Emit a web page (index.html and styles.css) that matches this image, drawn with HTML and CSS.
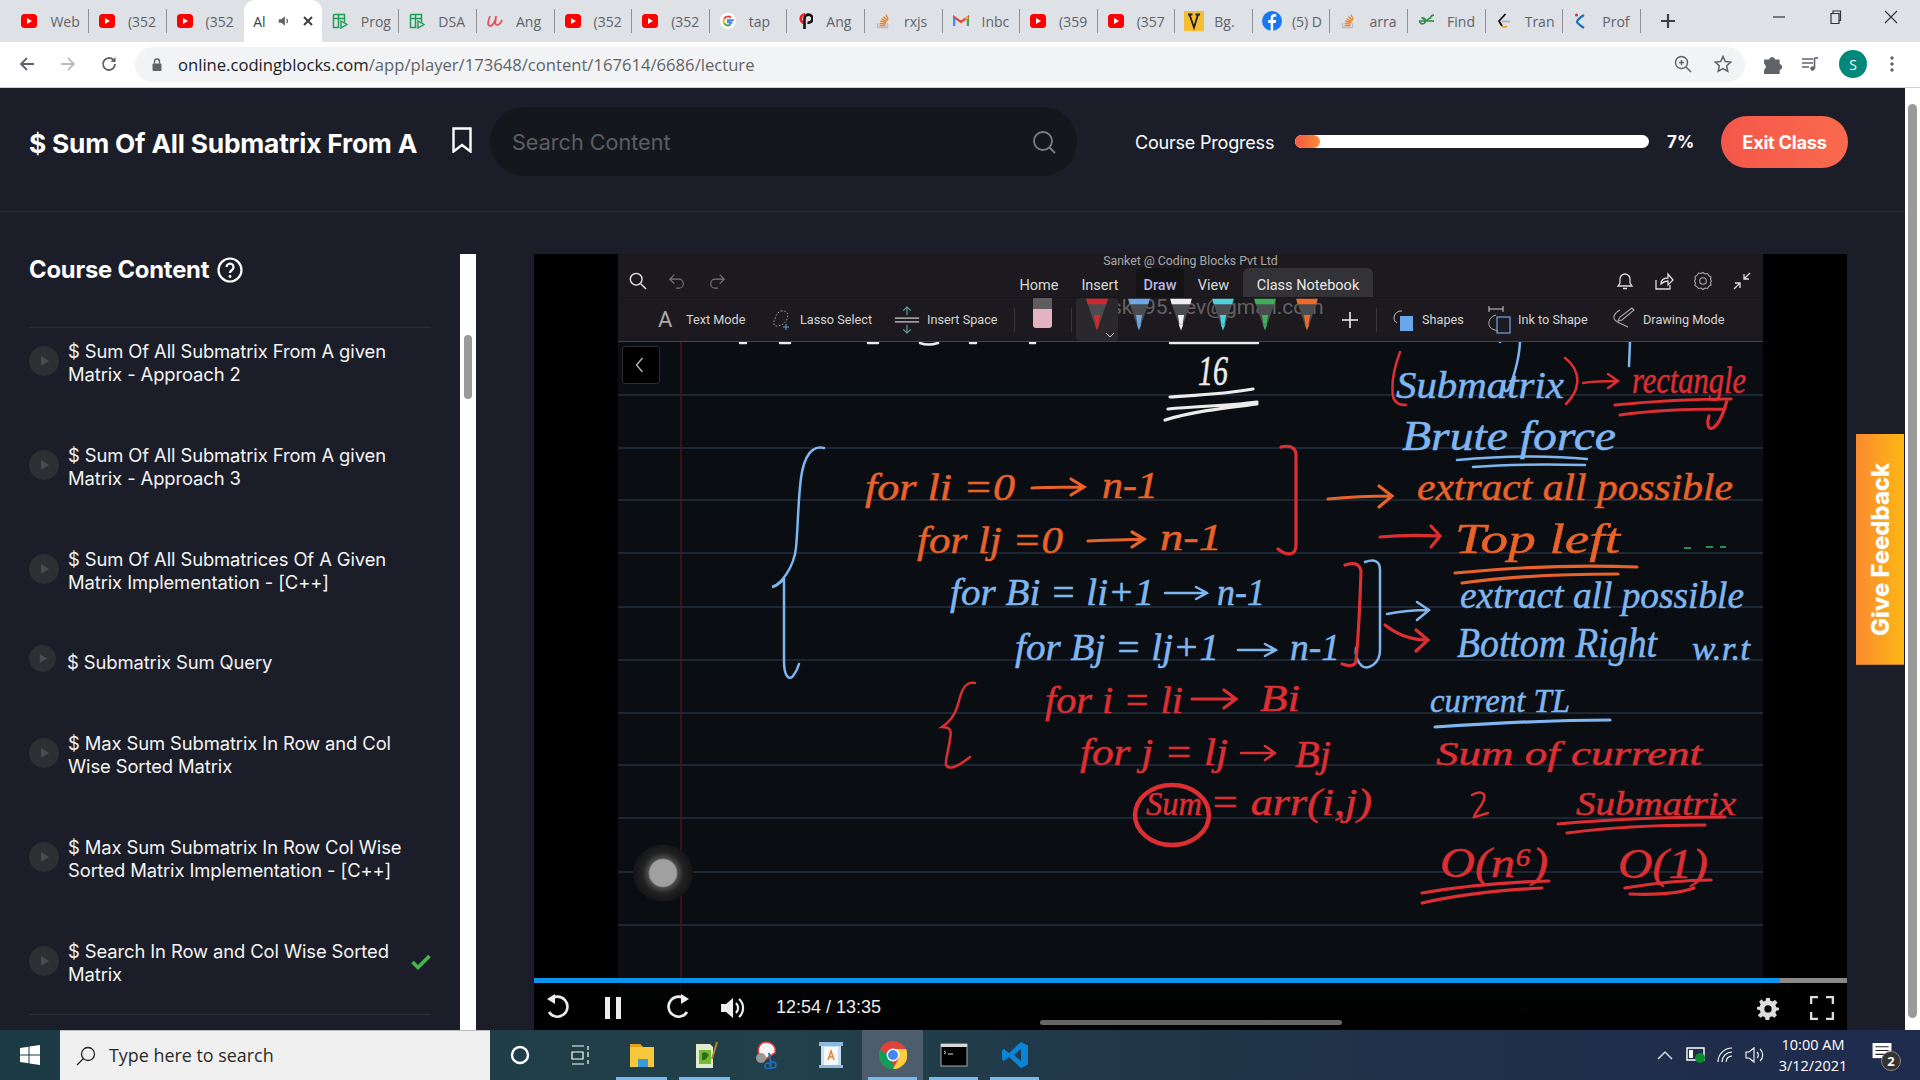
FILE: index.html
```html
<!DOCTYPE html>
<html lang="en">
<head>
<meta charset="utf-8">
<title>Coding Blocks player</title>
<link rel="stylesheet" href="styles.css">
</head>
<body>
<svg class="defs" aria-hidden="true">
  <symbol id="yt" viewBox="0 0 16 16"><rect x="0" y="1" width="16" height="14" rx="3.5" fill="#f00"/><path d="M6 5l5 3-5 3z" fill="#fff"/></symbol>
  <symbol id="sheet" viewBox="0 0 16 16"><path d="M1.5 1.5h11v8M1.5 1.5v13h6M1.5 5.5h11M6.5 1.5v13" fill="none" stroke="#1e9e55" stroke-width="1.5"/><path d="M9 8l6 3.5-6 3.5z" fill="none" stroke="#1e9e55" stroke-width="1.4"/></symbol>
  <symbol id="ang" viewBox="0 0 16 16"><path d="M3 3c-2 5-3 10 0 10s6-6 6-10c0 4-2 9 1 9s4-3 5-5" fill="none" stroke="#e2505a" stroke-width="1.7"/></symbol>
  <symbol id="goog" viewBox="0 0 18 18"><circle cx="9" cy="9" r="9" fill="#fff"/><path d="M15.500 8H9v2.400h3.800A4.300 4.300 0 0 1 10.500 13" fill="none" stroke="#4285f4" stroke-width="2.200"/><path d="M4.700 11.500a5 5 0 0 1 0-5" fill="none" stroke="#fbbc05" stroke-width="2.200"/><path d="M4.700 6.500A5 5 0 0 1 12.300 5.300" fill="none" stroke="#ea4335" stroke-width="2.200"/><path d="M4.700 11.500A5 5 0 0 0 11.500 13.300" fill="none" stroke="#34a853" stroke-width="2.200"/></symbol>
  <symbol id="cp" viewBox="0 0 16 16"><path d="M8 1.500a4.200 4.200 0 1 0 0 8.400" fill="none" stroke="#e22" stroke-width="2.800"/><path d="M7.500 16V5.500a4 4 0 1 1 3 4" fill="none" stroke="#111" stroke-width="2.600"/></symbol>
  <symbol id="so" viewBox="0 0 16 16"><path d="M2.500 10v4.500h10V10" fill="none" stroke="#bcbbbb" stroke-width="1.300"/><path d="M4.500 12.500h6M4.700 10.300l6 .5M5.300 8l5.800 1.500M6.500 5.700l5.200 3M8.500 3.500l4 4.200M11 1.500l2.200 5.300" stroke="#f48024" stroke-width="1.300" fill="none"/></symbol>
  <symbol id="gm" viewBox="0 0 16 16"><path d="M1 13V4l7 5 7-5v9" fill="none" stroke="#ea4335" stroke-width="2.200"/><path d="M1 13V5" stroke="#4285f4" stroke-width="2.200"/><path d="M15 13V5" stroke="#34a853" stroke-width="2.200"/><path d="M12.500 5.800L15 4" stroke="#fbbc05" stroke-width="2.200"/></symbol>
  <symbol id="vv" viewBox="0 0 20 20"><rect width="20" height="20" fill="#f5bd33"/><path d="M4 3.500h4.500M11.500 3.500H16M5.500 3.500l4.500 13 4-13" fill="none" stroke="#222" stroke-width="1.800"/></symbol>
  <symbol id="fb" viewBox="0 0 20 20"><circle cx="10" cy="10" r="10" fill="#1877f2"/><path d="M11.200 20v-8h2.500l.5-3h-3V7.200c0-1 .4-1.500 1.500-1.500h1.600V3.200c-3.400-.6-5.600.4-5.600 3.500V9H6.200v3h2.500v8z" fill="#fff"/></symbol>
  <symbol id="gfg" viewBox="0 0 16 16"><path d="M8 8H1.500a3 3 0 1 0 2-3c2 0 3 2 4.500 3 1.500-1 2.500-3 4.500-3a3 3 0 1 1 2 3z" fill="none" stroke="#2f8d46" stroke-width="1.600"/></symbol>
  <symbol id="lc" viewBox="0 0 16 16"><path d="M9.500 1L3 8l3 5" fill="none" stroke="#111" stroke-width="1.800"/><path d="M6 13c1 1.500 3 1.500 5 0" fill="none" stroke="#f89f1b" stroke-width="1.800"/><path d="M6 8.500h8" stroke="#b3b3b3" stroke-width="1.800"/></symbol>
  <symbol id="kn" viewBox="0 0 16 16"><path d="M11 2C6 5 4 8 4 9c1 2 4 4 7 6" fill="none" stroke="#1d71b8" stroke-width="2.200"/><circle cx="3.500" cy="2" r="1.500" fill="#e22"/></symbol>
  <symbol id="spk" viewBox="0 0 16 16"><path d="M2 6h3l4-3.500v11L5 10H2z" fill="#5f6368"/><path d="M11 5.500a4 4 0 0 1 0 5" fill="none" stroke="#5f6368" stroke-width="1.300"/></symbol>
  <symbol id="pen" viewBox="0 0 34 44"><path d="M3 2h28L20 34h-6z" fill="#4a4c50"/><path d="M14 34h6l-3 8z" fill="currentColor"/><path d="M3 1h28l-2 7H5z" fill="currentColor"/><path d="M13 22h8l-2 12h-4z" fill="currentColor"/></symbol>
  <symbol id="play" viewBox="0 0 30 30"><circle cx="15" cy="15" r="15" fill="#2e2f33"/><path d="M12 10l8 5-8 5z" fill="#4b4c50"/></symbol>
</svg>

<div class="tabstrip">
  <div class="tab"><svg class="fav"><use href="#yt"/></svg><span class="tt">Web</span></div>
  <div class="tab"><svg class="fav"><use href="#yt"/></svg><span class="tt">(352</span></div>
  <div class="tab nosep"><svg class="fav"><use href="#yt"/></svg><span class="tt">(352</span></div>
  <div class="tab active"><span class="tt tt-short">Al</span><svg class="spk"><use href="#spk"/></svg><svg class="tabx" viewBox="0 0 12 12"><path d="M2 2l8 8M10 2l-8 8" stroke="#3c4043" stroke-width="2"/></svg></div>
  <div class="tab"><svg class="fav"><use href="#sheet"/></svg><span class="tt">Prog</span></div>
  <div class="tab"><svg class="fav"><use href="#sheet"/></svg><span class="tt">DSA</span></div>
  <div class="tab"><svg class="fav"><use href="#ang"/></svg><span class="tt">Ang</span></div>
  <div class="tab"><svg class="fav"><use href="#yt"/></svg><span class="tt">(352</span></div>
  <div class="tab"><svg class="fav"><use href="#yt"/></svg><span class="tt">(352</span></div>
  <div class="tab"><svg class="fav"><use href="#goog"/></svg><span class="tt">tap</span></div>
  <div class="tab"><svg class="fav"><use href="#cp"/></svg><span class="tt">Ang</span></div>
  <div class="tab"><svg class="fav"><use href="#so"/></svg><span class="tt">rxjs</span></div>
  <div class="tab"><svg class="fav"><use href="#gm"/></svg><span class="tt">Inbc</span></div>
  <div class="tab"><svg class="fav"><use href="#yt"/></svg><span class="tt">(359</span></div>
  <div class="tab"><svg class="fav"><use href="#yt"/></svg><span class="tt">(357</span></div>
  <div class="tab"><svg class="fav fav-lg"><use href="#vv"/></svg><span class="tt">Bg.</span></div>
  <div class="tab"><svg class="fav fav-lg"><use href="#fb"/></svg><span class="tt">(5) D</span></div>
  <div class="tab"><svg class="fav"><use href="#so"/></svg><span class="tt">arra</span></div>
  <div class="tab"><svg class="fav"><use href="#gfg"/></svg><span class="tt">Find</span></div>
  <div class="tab"><svg class="fav"><use href="#lc"/></svg><span class="tt">Tran</span></div>
  <div class="tab"><svg class="fav"><use href="#kn"/></svg><span class="tt">Prof</span></div>
  <svg class="newtab" viewBox="0 0 16 16"><path d="M8 1v14M1 8h14" stroke="#3c4043" stroke-width="2.200"/></svg>
  <div class="winctl">
    <svg class="wc" viewBox="0 0 14 14"><path d="M1 7h12" stroke="#333" stroke-width="1.200"/></svg>
    <svg class="wc" viewBox="0 0 14 14"><path d="M3 3.500h8v10H3zM5 3.500V1h7.500v9.500H11" fill="none" stroke="#333" stroke-width="1.200"/></svg>
    <svg class="wc" viewBox="0 0 14 14"><path d="M1 1l12 12M13 1L1 13" stroke="#333" stroke-width="1.100"/></svg>
  </div>
</div>

<div class="toolbar">
  <svg class="navb" viewBox="0 0 18 18"><path d="M16 9H3M9 3L3 9l6 6" fill="none" stroke="#5f6368" stroke-width="1.800"/></svg>
  <svg class="navb" viewBox="0 0 18 18"><path d="M2 9h13M9 3l6 6-6 6" fill="none" stroke="#bbbdc0" stroke-width="1.800"/></svg>
  <svg class="navb" viewBox="0 0 18 18"><path d="M15 9a6 6 0 1 1-1.800-4.300L15 6.500" fill="none" stroke="#5f6368" stroke-width="1.800"/><path d="M15.500 2v5h-5z" fill="#5f6368"/></svg>
  <div class="omni">
    <svg class="lock" viewBox="0 0 12 14"><path d="M3.500 6V4a2.500 2.500 0 0 1 5 0v2" fill="none" stroke="#5f6368" stroke-width="1.400"/><rect x="1.500" y="6" width="9" height="7.500" rx="1" fill="#5f6368"/></svg>
    <span class="url"><span class="url-d">online.codingblocks.com</span>/app/player/173648/content/167614/6686/lecture</span>
    <svg class="omni-i zoomi" viewBox="0 0 18 18"><circle cx="7.500" cy="7.500" r="6" fill="none" stroke="#5f6368" stroke-width="1.500"/><path d="M12 12l5 5M7.500 5v5M5 7.500h5" stroke="#5f6368" stroke-width="1.500"/></svg>
    <svg class="omni-i stari" viewBox="0 0 18 18"><path d="M9 1.500l2.300 5 5.400.6-4 3.700 1.100 5.400L9 13.500l-4.800 2.700 1.100-5.400-4-3.700 5.400-.6z" fill="none" stroke="#5f6368" stroke-width="1.500"/></svg>
  </div>
  <svg class="tb-i ext" viewBox="0 0 18 18"><path d="M1 5h4.500a2.800 2.800 0 0 1 5.500 0H15v4a2.800 2.800 0 0 1 0 5.500V18H1v-4a2.800 2.800 0 0 0 0-5z" fill="#5f6368"/></svg>
  <svg class="tb-i med" viewBox="0 0 18 18"><path d="M1 4h11M1 8h11M1 12h7" stroke="#5f6368" stroke-width="1.600"/><path d="M13.500 3v10.500" stroke="#5f6368" stroke-width="1.600"/><circle cx="11.500" cy="13.500" r="2.200" fill="#5f6368"/><path d="M13.500 3H17" stroke="#5f6368" stroke-width="1.600"/></svg>
  <span class="avatar">S</span>
  <svg class="tb-i dots" viewBox="0 0 6 18"><circle cx="3" cy="3" r="1.700" fill="#5f6368"/><circle cx="3" cy="9" r="1.700" fill="#5f6368"/><circle cx="3" cy="15" r="1.700" fill="#5f6368"/></svg>
</div>

<div class="page">
  <div class="app">
    <header class="hdr">
      <h1 class="title">$ Sum Of All Submatrix From A</h1>
      <svg class="bm" viewBox="0 0 20 26"><path d="M1.500 1.500h17v23L10 18l-8.500 6.500z" fill="none" stroke="#fff" stroke-width="2.400"/></svg>
      <div class="search"><span class="search-t">Search Content</span>
        <svg class="search-i" viewBox="0 0 24 24"><circle cx="11" cy="11" r="9" fill="none" stroke="#7c7e83" stroke-width="1.800"/><path d="M17.500 17.500L23 23" stroke="#7c7e83" stroke-width="1.800"/></svg>
      </div>
      <span class="cp-label">Course Progress</span>
      <div class="cp-bar"><div class="cp-fill" style="width:7%"></div></div>
      <span class="cp-pct">7%</span>
      <button class="exit">Exit Class</button>
    </header>

    <div class="body">
      <aside class="side">
        <div class="course">
          <h2 class="cc-h">Course Content <svg class="help" viewBox="0 0 26 26"><circle cx="13" cy="13" r="11.500" fill="none" stroke="#fff" stroke-width="2.200"/><path d="M9.500 10a3.500 3.500 0 1 1 5.500 3c-1.500 1-2 1.500-2 3" fill="none" stroke="#fff" stroke-width="2.200"/><circle cx="13" cy="19.500" r="1.400" fill="#fff"/></svg></h2>
          <ul class="list">
            <li class="item"><svg class="pl"><use href="#play"/></svg><span class="it">$ Sum Of All Submatrix From A given<br>Matrix - Approach 2</span></li>
            <li class="item"><svg class="pl"><use href="#play"/></svg><span class="it">$ Sum Of All Submatrix From A given<br>Matrix - Approach 3</span></li>
            <li class="item"><svg class="pl"><use href="#play"/></svg><span class="it">$ Sum Of All Submatrices Of A Given<br>Matrix Implementation - [C++]</span></li>
            <li class="item item-one"><svg class="pl pl-sm"><use href="#play"/></svg><span class="it it-one">$ Submatrix Sum Query</span></li>
            <li class="item"><svg class="pl"><use href="#play"/></svg><span class="it">$ Max Sum Submatrix In Row and Col<br>Wise Sorted Matrix</span></li>
            <li class="item"><svg class="pl"><use href="#play"/></svg><span class="it">$ Max Sum Submatrix In Row Col Wise<br>Sorted Matrix Implementation - [C++]</span></li>
            <li class="item"><svg class="pl"><use href="#play"/></svg><span class="it">$ Search In Row and Col Wise Sorted<br>Matrix</span><svg class="chk" viewBox="0 0 20 16"><path d="M1.500 8l5.500 5.500L18.500 2" fill="none" stroke="#46b450" stroke-width="3.600"/></svg></li>
          </ul>
        </div>
        <div class="rail"><div class="rail-th"></div></div>
      </aside>

      <section class="video">
        <div class="frame">
          <div class="v-top">
            <span class="v-owner">Sanket @ Coding Blocks Pvt Ltd</span>
            <svg class="vt-i" viewBox="0 0 20 20"><circle cx="8" cy="8" r="6.500" fill="none" stroke="#e8e8e8" stroke-width="1.500"/><path d="M13 13l6 6" stroke="#e8e8e8" stroke-width="1.500"/></svg>
            <svg class="vt-i vt-undo" viewBox="0 0 20 20"><path d="M7 3L2 8l5 5M2 8h10a5 5 0 0 1 0 10H9" fill="none" stroke="#77797c" stroke-width="1.300"/></svg>
            <svg class="vt-i vt-redo" viewBox="0 0 20 20"><path d="M13 3l5 5-5 5M18 8H8a5 5 0 0 0 0 10h3" fill="none" stroke="#77797c" stroke-width="1.300"/></svg>
            <nav class="v-tabs">
              <span class="vtab vt-home">Home</span><span class="vtab vt-ins">Insert</span><span class="vtab vt-draw">Draw</span><span class="vtab vt-view">View</span><span class="vtab vt-cn">Class Notebook</span>
            </nav>
            <svg class="vr-i vr-first" viewBox="0 0 20 20"><path d="M3 15h14l-2-3V8a5 5 0 0 0-10 0v4zM8 17.500h4" fill="none" stroke="#ddd" stroke-width="1.300"/></svg>
            <svg class="vr-i" viewBox="0 0 20 20"><path d="M2 9v9h14v-4M7 13c0-4 3-6 7-6V3l5 6-5 5v-4c-3 0-5 1-7 3z" fill="none" stroke="#ddd" stroke-width="1.300"/></svg>
            <svg class="vr-i" viewBox="0 0 20 20"><path d="M10 1.500l2 1.500 2.500-.5 1.300 2.200 2.200 1.300-.5 2.500 1 1.500-1 1.500.5 2.500-2.200 1.300-1.300 2.200-2.500-.5-2 1.500-2-1.500-2.500.5L4.200 15.800 2 14.500l.5-2.500-1-2 1-2L2 5.500l2.200-1.300L5.500 2l2.500.5z" fill="none" stroke="#aaa" stroke-width="1.100"/><circle cx="10" cy="10" r="3.300" fill="none" stroke="#aaa" stroke-width="1.100"/></svg>
            <svg class="vr-i" viewBox="0 0 20 20"><path d="M18 2l-6 6M12 3v5h5M2 18l6-6M8 17v-5H3" fill="none" stroke="#ddd" stroke-width="1.300"/></svg>
          </div>
          <div class="ribbon">
            <span class="wm">ska95.dev@gmail.com</span>
            <span class="r-a">A</span><span class="rt rt-1">Text Mode</span>
            <svg class="ri ri-lasso" viewBox="0 0 18 22"><path d="M9 2c6-1 8 3 6 8-1 4-5 6-9 7-5 1-5-4-3-7 1-4 3-7 6-8z" fill="none" stroke="#999" stroke-width="1" stroke-dasharray="1.600 1.600"/><path d="M14 15v6M11 18h6" stroke="#5ea7e0" stroke-width="1"/></svg><span class="rt rt-2">Lasso Select</span>
            <svg class="ri ri-ins" viewBox="0 0 26 30"><path d="M0 13h26M0 17h26" stroke="#ccc" stroke-width="1.200"/><path d="M13 10V2M9 5l4-4 4 4M13 20v8M9 25l4 4 4-4" fill="none" stroke="#5fa89f" stroke-width="1.200"/></svg><span class="rt rt-3">Insert Space</span>
            <i class="rsep rsep-1"></i>
            <span class="eraser"></span>
            <i class="rsep rsep-2"></i>
            <span class="slot"><svg class="pen pen-r"><use href="#pen"/></svg><svg class="slot-c" viewBox="0 0 10 6"><path d="M1 1l4 4 4-4" fill="none" stroke="#ccc" stroke-width="1"/></svg></span>
            <span class="pw"><svg class="pen pen-b"><use href="#pen"/></svg></span>
            <span class="pw"><svg class="pen pen-w"><use href="#pen"/></svg></span>
            <span class="pw"><svg class="pen pen-c"><use href="#pen"/></svg></span>
            <span class="pw"><svg class="pen pen-g"><use href="#pen"/></svg></span>
            <span class="pw"><svg class="pen pen-o"><use href="#pen"/></svg></span>
            <svg class="r-plus" viewBox="0 0 20 20"><path d="M10 0v20M0 10h20" stroke="#eee" stroke-width="2"/></svg>
            <i class="rsep rsep-3"></i>
            <svg class="ri ri-sh" viewBox="0 0 22 24"><path d="M10 3a7 7 0 0 0-8 7c0 2 1 4 3 5" fill="none" stroke="#bbb" stroke-width="1"/><rect x="8" y="8" width="13" height="15" fill="#6ba5ea"/></svg><span class="rt rt-4">Shapes</span>
            <svg class="ri ri-ink" viewBox="0 0 25 30"><path d="M3 1v6M17 1v6M3 4h14" stroke="#ccc" stroke-width="1"/><rect x="11" y="12" width="13" height="16" fill="none" stroke="#6ba5ea" stroke-width="1.200"/><path d="M10 10C4 11 1 18 4 22c2 3 6 3 8 4" fill="none" stroke="#aaa" stroke-width="1"/></svg><span class="rt rt-5">Ink to Shape</span>
            <svg class="ri ri-dr" viewBox="0 0 24 22"><path d="M20 1L8 10 6 14l4-1L22 3zM8 3C2 6 0 11 4 14c3 2 8 4 12 6" fill="none" stroke="#aaa" stroke-width="1.100"/></svg><span class="rt rt-6">Drawing Mode</span>
          </div>
          <div class="note">
            <svg class="ink" viewBox="618 342 1145 688" aria-label="handwritten notes">
              <g class="rules">
                <path d="M618 395h1145M618 448h1145M618 500h1145M618 553h1145M618 607h1145M618 660h1145M618 713h1145M618 765h1145M618 818h1145M618 872h1145M618 925h1145"/>
              </g>
              <path class="margin" d="M681 342v688"/>

              <g class="hw w">
                <text class="f-b" x="1198" y="385" textLength="30" lengthAdjust="spacingAndGlyphs">16</text>
                <path class="s3" d="M1170 397c30-2 55-3 83-8M1168 409c30-3 60-3 89-7M1165 420c30-9 60-12 92-16"/>
                <path class="s2" d="M1170 343h88M740 343h6M780 343h10M868 343h10M920 343q8 3 18 0M970 343h6M1030 343h5"/>
              </g>

              <g class="hw b">
                <path class="s2" d="M824 448c-12-3-20 8-23 30-3 22-3 50-5 70-2 18-14 36-24 39 5-1 10-6 12-8v82c0 15 5 20 9 15 3-4 5-8 6-12"/>
                <text x="950" y="605" textLength="204" lengthAdjust="spacingAndGlyphs">for  Bi = li+1</text>
                <path class="s2" d="M1165 593h42m-11-6l11 6-11 6"/>
                <text x="1217" y="605" textLength="48" lengthAdjust="spacingAndGlyphs">n-1</text>
                <text x="1015" y="660" textLength="204" lengthAdjust="spacingAndGlyphs">for  Bj = lj+1</text>
                <path class="s2" d="M1238 650h38m-11-6l11 6-11 6"/>
                <text x="1290" y="660" textLength="50" lengthAdjust="spacingAndGlyphs">n-1</text>
                <text x="1396" y="398" textLength="168" lengthAdjust="spacingAndGlyphs">Submatrix</text>
                <path class="s2" d="M1520 342c-1 20-8 40-12 48-3 4-5-2-4-8M1630 342l-1 24M1500 342h0"/>
                <text class="f-b" x="1402" y="450" textLength="214" lengthAdjust="spacingAndGlyphs">Brute force</text>
                <path class="s2" d="M1457 460c45-4 90-5 130-1M1473 467c40-3 75-3 112-2"/>
                <text x="1460" y="608" textLength="284" lengthAdjust="spacingAndGlyphs">extract  all  possible</text>
                <text class="f-b" x="1457" y="657" textLength="200" lengthAdjust="spacingAndGlyphs">Bottom Right</text>
                <text class="f-s" x="1692" y="660" textLength="58" lengthAdjust="spacingAndGlyphs">w.r.t</text>
                <text class="f-s" x="1430" y="712" textLength="140" lengthAdjust="spacingAndGlyphs">current TL</text>
                <path class="s3" d="M1435 727c60-4 120-7 175-7"/>
                <path class="s2" d="M1365 562c8-3 15-2 15 8v80c0 14-12 20-18 16-5-4-7-12-6-18"/>
                <path class="s2" d="M1387 614c15-3 28-4 42-4m-12-8 12 8-12 10"/>
              </g>

              <g class="hw o">
                <text x="865" y="500" textLength="150" lengthAdjust="spacingAndGlyphs">for li =0</text>
                <path class="s3" d="M1032 488c18-1 35-1 52-1m-13-8 13 8-13 8"/>
                <text x="1102" y="498" textLength="56" lengthAdjust="spacingAndGlyphs">n-1</text>
                <text x="917" y="553" textLength="146" lengthAdjust="spacingAndGlyphs">for lj =0</text>
                <path class="s3" d="M1088 541c18-1 38-1 56-2m-12-7 12 7-12 8"/>
                <text x="1160" y="550" textLength="62" lengthAdjust="spacingAndGlyphs">n-1</text>
                <path class="s3" d="M1328 499c20-2 42-3 64-3m-13-10 13 10-13 11"/>
                <text x="1417" y="500" textLength="316" lengthAdjust="spacingAndGlyphs">extract  all  possible</text>
                <text class="f-b" x="1455" y="553" textLength="165" lengthAdjust="spacingAndGlyphs">Top left</text>
                <path class="s3" d="M1455 573c60-6 125-8 182-6M1462 583c50-7 105-9 156-9"/>
              </g>

              <g class="hw r">
                <path class="s2" d="M975 683c-8-2-12 4-15 14-3 12-6 22-18 30 8 0 10 3 8 12-2 14-5 22-4 26 3 5 10 3 24-8"/>
                <text x="1045" y="713" textLength="138" lengthAdjust="spacingAndGlyphs">for i = li</text>
                <path class="s3" d="M1192 699h44m-12-9 12 9-12 9"/>
                <text x="1260" y="711" textLength="40" lengthAdjust="spacingAndGlyphs">Bi</text>
                <text x="1080" y="765" textLength="148" lengthAdjust="spacingAndGlyphs">for j = lj</text>
                <path class="s2" d="M1241 753h34m-10-7 10 7-10 7"/>
                <text x="1295" y="767" textLength="36" lengthAdjust="spacingAndGlyphs">Bj</text>
                <ellipse class="s4" cx="1172" cy="815" rx="37" ry="30"/>
                <text class="f-s" x="1146" y="815" textLength="56" lengthAdjust="spacingAndGlyphs">Sum</text>
                <text x="1210" y="815" textLength="162" lengthAdjust="spacingAndGlyphs">= arr(i,j)</text>
                <path class="s3" d="M1281 447c8-2 15 0 15 8v90c0 10-8 12-18 4M1345 565c8-2 14-3 16 6-1 30-2 60-5 90-1 6-8 5-14 3"/>
                <path class="s2" d="M1400 352c-6 16-9 30-7 44 1 6 5 9 13 9M1565 358c8 6 14 16 12 26-1 9-6 15-11 20"/>
                <path class="s2" d="M1583 383c12-2 22-2 34-2m-9-7 10 7-10 7"/>
                <text x="1632" y="393" textLength="114" lengthAdjust="spacingAndGlyphs">rectangle</text>
                <path class="s3" d="M1615 405c40-4 80-6 116-6M1620 415c35-5 70-6 105-6M1727 400c-3 12-8 24-14 28-6 2-6-6-4-12"/>
                <path class="s3" d="M1380 537c20-2 40-2 60-1m-9-10 9 10-9 11M1385 625c15 12 30 15 43 15m-12-10 12 10-12 11"/>
                <text class="f-s" x="1436" y="765" textLength="266" lengthAdjust="spacingAndGlyphs">Sum of  current</text>
                <path class="s2" d="M1472 795c8-5 14-2 12 4-2 8-8 11-10 18 6-1 10-3 14-4"/>
                <text class="f-s" x="1576" y="815" textLength="160" lengthAdjust="spacingAndGlyphs">Submatrix</text>
                <path class="s3" d="M1558 824c55-5 110-7 167-7M1567 833c45-6 90-8 138-8"/>
                <text class="f-b" x="1440" y="877" textLength="108" lengthAdjust="spacingAndGlyphs">O(n⁶)</text>
                <text class="f-b" x="1618" y="878" textLength="90" lengthAdjust="spacingAndGlyphs">O(1)</text>
                <path class="s3" d="M1422 893c40-7 85-11 127-12M1422 903c40-9 80-13 120-15M1625 888c30-5 60-8 86-8M1630 894c25 1 50-1 64-6"/>
              </g>
              <path class="dash" d="M1684 548h7M1706 547h7M1720 547h6"/>
            </svg>
            <span class="back"><svg viewBox="0 0 10 16"><path d="M8 1L2 8l6 7" fill="none" stroke="#bbb" stroke-width="1.300"/></svg></span>
            <span class="touch"></span>
          </div>
        </div>
        <div class="ctrl">
          <div class="prog"><div class="prog-f" style="width:94.900%"></div></div>
          <div class="c-row">
            <svg class="c-i c-rw" viewBox="0 0 26 30"><path d="M6 8a10 10 0 1 1-1 12" fill="none" stroke="#eee" stroke-width="2.600" transform="translate(1 -1)"/><path d="M13 1v10L5 6z" fill="#eee" transform="translate(-1)"/></svg>
            <svg class="c-i c-pa" viewBox="0 0 22 26"><path d="M3 2h5v22H3zM14 2h5v22h-5z" fill="#eee"/></svg>
            <svg class="c-i c-fw" viewBox="0 0 26 30"><path d="M20 8a10 10 0 1 0 1 12" fill="none" stroke="#eee" stroke-width="2.600" transform="translate(-1 -1)"/><path d="M13 1v10l8-5z" fill="#eee" transform="translate(1)"/></svg>
            <svg class="c-i c-vo" viewBox="0 0 26 26"><path d="M1 9h5l7-6v20l-7-6H1z" fill="#eee"/><path d="M16 8a7 7 0 0 1 0 10M19 4a12 12 0 0 1 0 18" fill="none" stroke="#eee" stroke-width="2.200"/></svg>
            <span class="c-time">12:54 / 13:35</span>
            <svg class="c-i c-ge" viewBox="0 0 24 24"><path d="M10 1h4l.6 3 2.400 1 2.600-1.700 2.800 2.800L20 8.700l1 2.400 3 .6v2.600l-3 .6-1 2.400 1.700 2.600-2.800 2.800-2.600-1.700-2.400 1-.6 3h-4l-.6-3-2.400-1-2.600 1.700-2.800-2.800L4 16.500l-1-2.400-3-.6v-2.600l3-.6 1-2.400-1.700-2.600 2.800-2.800L7 5l2.400-1z" fill="#ddd"/><circle cx="12" cy="13" r="4" fill="#050505"/></svg>
            <svg class="c-i c-fs" viewBox="0 0 24 24"><path d="M1 8V1h7M16 1h7v7M23 16v7h-7M8 23H1v-7" fill="none" stroke="#ddd" stroke-width="2.600"/></svg>
          </div>
          <div class="hscroll"></div>
        </div>
      </section>
    </div>
    <a class="feedback">Give Feedback</a>
  </div>
  <div class="pscroll"><div class="pscroll-th"></div></div>
</div>

<footer class="taskbar">
  <svg class="tk-win" viewBox="0 0 20 20"><path d="M0 3l8.500-1.200v7.700H0zM9.500 1.600L20 0v9.500H9.500zM0 10.500h8.500v7.700L0 17zM9.500 10.500H20V20L9.500 18.400z" fill="#fff"/></svg>
  <div class="tk-search">
    <svg class="tk-s-i" viewBox="0 0 20 20"><circle cx="12" cy="8" r="6.500" fill="none" stroke="#222" stroke-width="1.300"/><path d="M7.500 12.500L1 19" stroke="#222" stroke-width="1.300"/></svg>
    <span class="tk-s-t">Type here to search</span>
  </div>
  <div class="tk-apps">
    <span class="app-b sys"><svg class="ta" viewBox="0 0 20 20"><circle cx="10" cy="10" r="8" fill="none" stroke="#fff" stroke-width="2.400"/></svg></span>
    <span class="app-b sys"><svg class="ta" viewBox="0 0 20 20"><path d="M2 1h12M2 19h12M2 7h11v7H2zM18 1v4M18 7v5M18 15v4" fill="none" stroke="#fff" stroke-width="1.200"/></svg></span>
    <span class="app-b wide on"><svg class="ta" viewBox="0 0 28 28"><path d="M2 3h10l3 3h11v20H2z" fill="#f8c83c"/><path d="M2 3h10l2 3H2z" fill="#e4a11b"/><path d="M10 18h10v8H10z" fill="#3a9bdc"/></svg></span>
    <span class="app-b wide on"><svg class="ta" viewBox="0 0 28 28"><path d="M5 3h14l3 3v21H5z" fill="#dfeccb"/><path d="M8 9h12v14H8z" fill="#76b83a"/><path d="M11 12c3-2 5 0 7 2-2 2-3 6-7 5z" fill="#2a6d16"/><path d="M26 1l-5 17" stroke="#b5822d" stroke-width="2"/></svg></span>
    <span class="app-b wide"><svg class="ta" viewBox="0 0 28 28"><path d="M8 2c7-3 15 2 13 10L12 18 5 13C3 9 5 4 8 2z" fill="#f5f5f5" stroke="#d33" stroke-width="1.600"/><circle cx="7" cy="17" r="5" fill="#999"/><path d="M15 12l2 10" stroke="#1c6fc4" stroke-width="2"/><circle cx="19" cy="24" r="3" fill="none" stroke="#1c6fc4" stroke-width="1.600"/><circle cx="14" cy="25" r="3" fill="none" stroke="#1c6fc4" stroke-width="1.600"/></svg></span>
    <span class="app-b wide"><svg class="ta" viewBox="0 0 28 28"><rect x="4" y="1" width="20" height="26" fill="#c9def3"/><rect x="7" y="6" width="14" height="18" fill="#f5f9fd"/><path d="M2 1h24v4H2zM2 24h24v3H2z" fill="#8db8e0"/><path d="M11 19l3-9 3 9M12 16h4" fill="none" stroke="#e8862a" stroke-width="1.500"/></svg></span>
    <span class="app-b on active"><svg class="ta" viewBox="0 0 28 28"><circle cx="14" cy="14" r="14" fill="#db4437"/><path d="M2 21A14 14 0 0 1 1 9l9 5 6 14A14 14 0 0 1 2 21z" fill="#0f9d58"/><path d="M14 8h13a14 14 0 0 1-13 20l6-11z" fill="#ffcd40"/><circle cx="14" cy="14" r="6.400" fill="#fff"/><circle cx="14" cy="14" r="5" fill="#4285f4"/></svg></span>
    <span class="app-b on"><svg class="ta" viewBox="0 0 28 28"><rect x="1" y="3" width="26" height="22" fill="#000" stroke="#aaa" stroke-width="1"/><rect x="1" y="3" width="26" height="3" fill="#d8d8d8"/><path d="M4 10l2 1.500-2 1.500M8 13h5" stroke="#ddd" stroke-width="1" fill="none"/></svg></span>
    <span class="app-b on"><svg class="ta" viewBox="0 0 28 28"><path d="M20 1l7 3.500v19L20 27 8 16l-5 4-2-1.500V9.500L3 8l5 4zM20 8l-7 6 7 6z" fill="#0a84d6"/></svg></span>
  </div>
  <div class="tray">
    <svg class="tr-i tr-c" viewBox="0 0 16 10"><path d="M1 9l7-7 7 7" fill="none" stroke="#fff" stroke-width="1.200"/></svg>
    <svg class="tr-i tr-b" viewBox="0 0 20 18"><path d="M1 2h17v12H1z" fill="none" stroke="#fff" stroke-width="1.400"/><path d="M3 4h4v8H3z" fill="#fff"/><circle cx="14" cy="12" r="5" fill="#0a8a2e"/></svg>
    <svg class="tr-i tr-w" viewBox="0 0 20 18"><path d="M2 16A14 14 0 0 1 16 2M6 16A10 10 0 0 1 16 6M10 16a6 6 0 0 1 6-6" fill="none" stroke="#fff" stroke-width="1.100"/></svg>
    <svg class="tr-i tr-v" viewBox="0 0 20 18"><path d="M1 6h3l5-4v14l-5-4H1z" fill="none" stroke="#fff" stroke-width="1.100"/><path d="M12 6a4 4 0 0 1 0 6M15 3a8 8 0 0 1 0 12" fill="none" stroke="#fff" stroke-width="1.100"/></svg>
    <div class="clock"><span>10:00 AM</span><span>3/12/2021</span></div>
    <div class="notif"><svg viewBox="0 0 20 18"><path d="M0 0h20v16H0z" fill="#fff"/><path d="M3 4h14M3 8h14M3 12h14" stroke="#222" stroke-width="1.200"/></svg><span class="badge">2</span></div>
  </div>
</footer>
</body>
</html>
```
FILE: styles.css
```css
* { box-sizing: border-box; }
html, body { margin: 0; padding: 0; height: 1080px; overflow: hidden; }
body { width: 1920px; display: flex; flex-direction: column; font-family: "Inter", "Liberation Sans", sans-serif; background: #1b1e28; }
.defs { position: absolute; width: 0; height: 0; }

/* Chrome tabs */
.tabstrip { height: 42px; flex: none; background: #dee1e6; display: flex; align-items: stretch; padding-left: 11.400px; font-family: "Open Sans", "Liberation Sans", sans-serif; }
.tab { flex: 0 0 77.600px; height: 42px; display: flex; align-items: center; padding-left: 10px; position: relative; overflow: hidden; }
.tab::after { content: ""; position: absolute; right: 0; top: 9px; width: 1px; height: 24px; background: #8f9296; }
.tab.nosep::after, .tab.active::after { display: none; }
.tab.active { background: #fff; border-radius: 11px 11px 0 0; padding-left: 9px; }
.fav { width: 16px; height: 16px; flex: none; }
.fav-lg { width: 20px; height: 20px; margin-left: -1px; margin-right: -3px; }
.tt { margin-left: 13px; font-size: 14px; color: #5f6368; white-space: nowrap; }
.tt-short { margin-left: 0; width: 14px; color: #3c4043; }
.spk { width: 14px; height: 14px; margin-left: 10px; flex: none; }
.tabx { width: 12px; height: 12px; margin-left: 11px; flex: none; }
.newtab { width: 16px; height: 16px; margin: 13px 0 0 19px; flex: none; }
.winctl { margin-left: auto; display: flex; gap: 42px; padding: 10px 22px 0 0; }
.wc { width: 14px; height: 14px; }

/* Chrome toolbar */
.toolbar { height: 46px; flex: none; background: #fff; border-bottom: 1px solid #cfd1d4; display: flex; align-items: center; padding-bottom: 1px; }
.navb { width: 18px; height: 18px; margin-left: 18px; margin-right: 4px; flex: none; }
.navb + .navb { margin-left: 19px; }
.omni { width: 1610px; height: 35px; margin-left: 13px; border-radius: 18px; background: #f1f3f4; display: flex; align-items: center; padding-left: 16px; font-family: "Open Sans", "Liberation Sans", sans-serif; }
.lock { width: 12px; height: 15px; flex: none; }
.url { margin-left: 15px; font-size: 16.640px; color: #5f6368; white-space: nowrap; }
.url-d { color: #202124; }
.omni-i { width: 18px; height: 18px; flex: none; }
.zoomi { margin-left: auto; }
.stari { margin: 0 13px 0 22px; }
.tb-i { flex: none; }
.ext { width: 20px; height: 20px; margin-left: 18px; }
.med { width: 18px; height: 18px; margin-left: 18px; }
.avatar { width: 28px; height: 28px; margin-left: 20px; border-radius: 50%; background: #00897b; color: #fff; font-size: 14px; display: flex; align-items: center; justify-content: center; flex: none; font-family: "Open Sans", sans-serif; }
.dots { width: 6px; height: 18px; margin-left: 22px; }

/* Page */
.page { height: 942px; flex: none; display: flex; }
.app { width: 1905px; flex: none; position: relative; background: #1b1e28; }
.pscroll { width: 15px; flex: none; background: #fff; padding: 16px 3px 0 3px; }
.pscroll-th { height: 914px; background: #9a9a9a; border-radius: 5px; }

.hdr { height: 124px; padding: 19px 0 35px 29px; border-bottom: 1px solid #2b2e38; display: flex; align-items: center; color: #fff; }
.title { margin: 4px 0 0; width: 423px; font-size: 26.300px; font-weight: 700; letter-spacing: -0.200px; white-space: nowrap; }
.bm { width: 20px; height: 26px; flex: none; margin-top: -4px; }
.search { width: 587px; height: 69px; margin-left: 18px; border-radius: 35px; background: #15171d; display: flex; align-items: center; padding: 0 21px 0 22px; justify-content: space-between; flex: none; }
.search-t { font-size: 21.600px; color: #5c5e63; margin-top: 1px; }
.search-i { width: 24px; height: 24px; }
.cp-label { margin: 1px -1px 0 58px; width: 161px; font-size: 18px; letter-spacing: -0.200px; white-space: nowrap; }
.cp-bar { width: 354px; height: 13px; background: #fff; border-radius: 7px; overflow: hidden; flex: none; }
.cp-fill { height: 100%; background: linear-gradient(90deg, #f4573f, #fb8c3c); border-radius: 7px; }
.cp-pct { margin: 1px 0 0 18px; width: 54px; font-size: 17px; font-weight: 700; }
.exit { width: 127px; height: 52px; border: 0; border-radius: 26px; background: linear-gradient(90deg, #f4574b, #fa6a4d); color: #fff; font: 700 18.300px "Inter", sans-serif; letter-spacing: -0.300px; padding: 0; }

.body { height: 818px; display: flex; }
.side { width: 534px; flex: none; display: flex; }
.course { width: 431px; padding: 43px 0 0 29px; margin-right: 29px; color: #fff; flex: none; }
.cc-h { margin: 0 0 42px; height: 30px; font-size: 23.800px; font-weight: 700; line-height: 30px; letter-spacing: -0.200px; display: flex; align-items: center; gap: 8px; white-space: nowrap; }
.help { width: 26px; height: 26px; }
.list { list-style: none; margin: 0; padding: 0; border-top: 1px solid #2b2e38; border-bottom: 1px solid #2b2e38; height: 688px; display: flex; flex-direction: column; gap: 38px; }
.item { height: 66px; display: flex; align-items: center; position: relative; flex: none; }
.item-one { height: 42px; }
.pl { width: 30px; height: 30px; flex: none; }
.pl-sm { width: 27px; height: 27px; margin-top: -5px; }
.it { margin-left: 9px; padding-top: 3px; font-size: 18.400px; line-height: 23px; letter-spacing: -0.100px; white-space: nowrap; color: #f4f4f4; }
.it-one { margin-left: 11px; margin-top: 3px; padding-top: 0; }
.chk { width: 20px; height: 16px; position: absolute; right: 0; top: 26px; }
.rail { width: 16px; flex: none; margin-top: 42px; background: #fff; padding: 81px 4px 0; }
.rail-th { width: 8px; height: 64px; border-radius: 4px; background: #9a9a9a; }

/* Video */
.video { width: 1313px; height: 776px; margin-top: 42px; flex: none; background: #000; position: relative; }
.frame { margin-left: 84px; width: 1145px; height: 776px; display: flex; flex-direction: column; background: #0a0e12; }
.v-top { height: 43px; flex: none; background: #1c1a1e; display: flex; align-items: center; position: relative; padding: 10px 0 0 11px; color: #ddd; }
.v-owner { position: absolute; top: 0; left: 0; right: 0; text-align: center; font: 12.300px/14px "Roboto", sans-serif; color: #a9a9ab; }
.vt-i { width: 18px; height: 18px; flex: none; }
.vt-undo { margin-left: 21px; }
.vt-redo { margin-left: 22px; }
.v-tabs { display: flex; align-items: flex-end; align-self: flex-end; height: 31px; margin-left: 283px; font: 14.500px "Roboto", sans-serif; }
.vtab { height: 29px; display: flex; align-items: center; justify-content: center; padding-top: 6px; color: #d9d9d9; }
.vt-home { width: 60px; }
.vt-ins { width: 62px; margin-right: 5px; }
.vt-draw { width: 48px; background: #131215; color: #b9b5e6; font-weight: 500; border-radius: 5px 5px 0 0; }
.vt-view { width: 59px; }
.vt-cn { width: 130px; background: #333236; color: #e8e8e8; border-radius: 6px 6px 0 0; }
.vr-i { width: 20px; height: 20px; margin-left: 19px; flex: none; }
.vr-first { margin-left: 242px; }
.ribbon { height: 45px; flex: none; background: #1c1a1e; border-top: 1px solid #17161a; border-bottom: 1px solid #3b4650; display: flex; align-items: center; position: relative; padding-left: 40px; font: 12.700px "Roboto", sans-serif; color: #d4d4d4; }
.r-a { width: 18px; font-size: 22px; color: #aaa; flex: none; }
.rt { white-space: nowrap; flex: none; margin-left: 10px; }
.rt-1 { width: 60px; }
.ri { flex: none; }
.ri-lasso { width: 18px; height: 22px; margin-left: 26px; }
.rt-2 { width: 73px; }
.ri-ins { width: 26px; height: 28px; margin-left: 21px; }
.rt-3 { width: 73px; margin-left: 7px; }
.rsep { width: 1px; height: 24px; background: #3a383c; flex: none; }
.rsep-1 { margin-left: 14px; }
.eraser { width: 19px; height: 30px; margin: -14px 0 0 18px; flex: none; background: linear-gradient(#5e5c5e 0 37%, #e4b3c2 37%); border-radius: 0 0 3px 3px; }
.rsep-2 { margin-left: 19px; }
.slot { width: 42px; height: 43px; margin-left: 4px; background: #2a282c; border-radius: 4px; display: flex; align-items: flex-start; justify-content: center; position: relative; flex: none; }
.slot-c { position: absolute; right: 3px; bottom: 3px; width: 10px; height: 6px; }
.pw { width: 42px; height: 43px; display: flex; justify-content: center; flex: none; position: relative; }
.pen { width: 32px; height: 34px; }
.pen-r { color: #d3262f; }
.pen-b { color: #6ea7e6; }
.pen-w { color: #eee; }
.pen-c { color: #4cd2de; }
.pen-g { color: #3fae5a; }
.pen-o { color: #ed6c2c; }
.r-plus { width: 16px; height: 16px; margin-left: 14px; flex: none; }
.rsep-3 { margin-left: 18px; }
.ri-sh { width: 22px; height: 24px; margin-left: 15px; }
.rt-4 { width: 43px; margin-left: 8px; }
.ri-ink { width: 25px; height: 30px; margin-left: 21px; }
.rt-5 { width: 72px; margin-left: 7px; }
.ri-dr { width: 24px; height: 22px; margin-left: 22px; margin-top: -4px; }
.rt-6 { width: 84px; margin-left: 7px; }
.wm { position: absolute; left: 493px; top: 0; font-size: 21px; line-height: 18px; color: rgba(200, 200, 200, .42); white-space: nowrap; }

.note { flex: 1; position: relative; overflow: hidden; background: linear-gradient(#0a0e12 92%, #060606); }
.ink { display: block; width: 1145px; height: 688px; position: absolute; left: 0; top: 0; }
.rules path { stroke: #25313f; stroke-width: 1.500; fill: none; }
.margin { stroke: #641018; stroke-width: 1.200; }
.hw text { font-family: "Liberation Serif", serif; font-style: italic; font-size: 38px; stroke-width: .5px; }
.hw .f-b { font-size: 42px; }
.hw .f-s { font-size: 34px; }
.hw path, .hw ellipse { fill: none; stroke-linecap: round; }
.s2 { stroke-width: 2.500; }
.s3 { stroke-width: 3.200; }
.s4 { stroke-width: 4.500; }
.w text { fill: #ececec; stroke: #ececec; }
.b text { fill: #7fb6f0; stroke: #7fb6f0; }
.o text { fill: #e8622a; stroke: #e8622a; }
.r text { fill: #dd2f33; stroke: #dd2f33; }
.hw.w path { stroke: #ececec; }
.hw.b path { stroke: #7fb6f0; }
.hw.o path { stroke: #e8622a; }
.hw.r path, .hw.r ellipse { stroke: #dd2f33; }
.dash { stroke: #2f8d46; stroke-width: 2; fill: none; }
.back { position: absolute; left: 4px; top: 4px; width: 38px; height: 38px; background: #000; border: 1px solid #2e2e30; border-radius: 3px; display: flex; align-items: center; justify-content: center; }
.back svg { width: 11px; height: 16px; margin-right: 4px; }
.touch { position: absolute; left: 25px; top: 512px; width: 40px; height: 38px; border-radius: 50%; background: radial-gradient(circle, #a0a0a0 0 32%, #4a4a4a 36%, #222 50%, #131415 72%, #0a0e12 100%); transform: scale(1.500); }

.ctrl { position: absolute; left: 0; right: 0; bottom: 0; height: 52px; background: linear-gradient(rgba(0,0,0,.6), rgba(0,0,0,.95)); }
.prog { height: 5px; background: #8a8a8a; }
.prog-f { height: 100%; background: #0a94ee; }
.c-row { height: 47px; display: flex; align-items: center; padding: 2px 13px 0 9px; position: relative; color: #eee; }
.c-i { flex: none; }
.c-rw { width: 26px; height: 30px; }
.c-pa { width: 22px; height: 26px; margin-left: 33px; }
.c-fw { width: 26px; height: 30px; margin-left: 43px; }
.c-vo { width: 26px; height: 26px; margin-left: 27px; }
.c-time { margin-left: 30px; font: 18px "Liberation Sans", sans-serif; color: #eee; white-space: nowrap; }
.c-ge { width: 22px; height: 24px; margin-left: auto; }
.c-fs { width: 24px; height: 24px; margin-left: 31px; }
.hscroll { position: absolute; left: 506px; top: 42px; width: 302px; height: 5px; border-radius: 3px; background: #666; }

.feedback { position: absolute; left: 1856px; top: 346px; width: 48px; height: 231px; background: linear-gradient(90deg, #fdb714, #fb8a2f); border-top: 1px solid #c9812a; display: flex; align-items: center; justify-content: center; writing-mode: vertical-rl; transform: rotate(180deg); color: #fff; font-weight: 800; font-size: 23.800px; white-space: nowrap; }

/* Taskbar */
.taskbar { height: 50px; flex: none; display: flex; align-items: center; background: linear-gradient(90deg, #1c3a43 0%, #22404a 40%, #1f3048 75%, #1f2b4e 100%); position: relative; font-family: "Open Sans", "Liberation Sans", sans-serif; color: #fff; }
.tk-win { width: 20px; height: 20px; margin-left: 20px; flex: none; }
.tk-search { width: 430px; height: 50px; margin-left: 20px; background: #f0f0f0; border-top: 1px solid #bbb; display: flex; align-items: center; padding: 0 0 2px 16px; flex: none; }
.tk-s-i { width: 20px; height: 20px; flex: none; margin-top: 2px; }
.tk-s-t { margin-left: 13px; font-size: 17.900px; color: #2a2a2a; white-space: nowrap; }
.tk-apps { display: flex; height: 50px; flex: none; }
.app-b { width: 61px; height: 50px; display: flex; align-items: center; justify-content: center; position: relative; flex: none; }
.app-b.sys { width: 60px; }
.app-b.wide { width: 63px; }
.app-b.active { background: #4c5e6b; }
.app-b.on::after { content: ""; position: absolute; left: 6px; right: 6px; bottom: 0; height: 3px; background: #76b9ed; }
.ta { width: 28px; height: 28px; }
.sys .ta { width: 20px; height: 20px; }
.tray { margin-left: auto; display: flex; align-items: center; padding-right: 22px; height: 50px; }
.tr-i { flex: none; }
.tr-c { width: 16px; height: 10px; }
.tr-b { width: 20px; height: 18px; margin-left: 13px; }
.tr-w { width: 20px; height: 18px; margin-left: 10px; }
.tr-v { width: 20px; height: 18px; margin-left: 9px; }
.clock { width: 90px; margin-left: 3px; display: flex; flex-direction: column; align-items: center; gap: 3px; font-size: 14.500px; line-height: 18px; white-space: nowrap; }
.notif { width: 26px; height: 26px; margin-left: 14px; position: relative; }
.notif svg { width: 20px; height: 17px; position: absolute; left: 0; top: 1px; }
.badge { position: absolute; left: 9px; top: 9px; width: 20px; height: 20px; border-radius: 50%; background: #333; border: 1px solid #888; font-size: 13px; font-weight: 700; display: flex; align-items: center; justify-content: center; }
```
